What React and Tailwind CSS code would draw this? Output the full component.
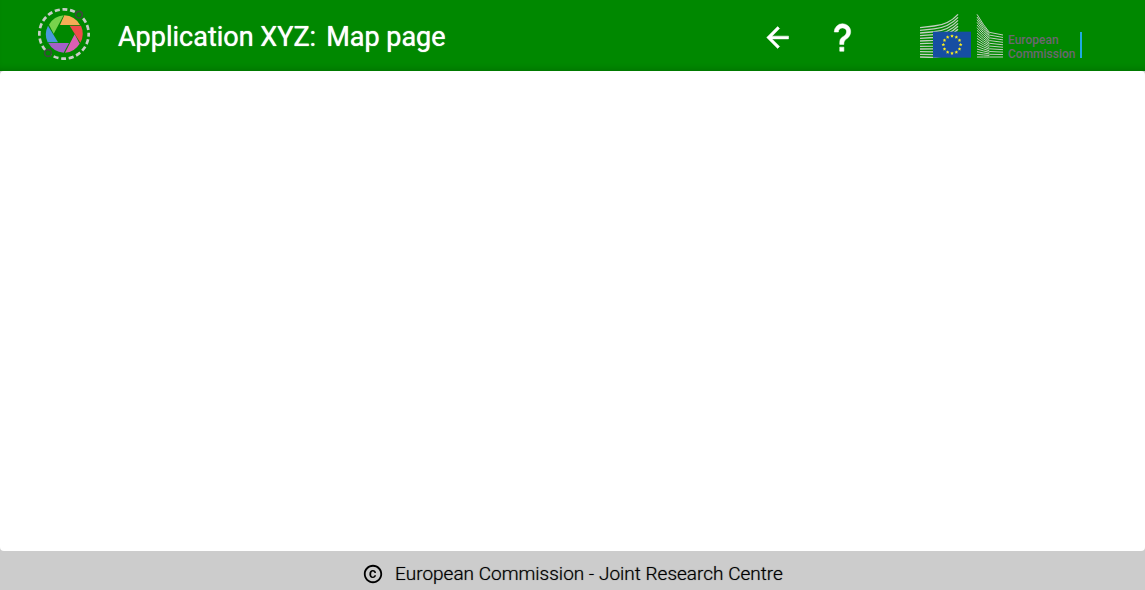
import React from "react";

const blades = [
  { fill: "#f5ad56", d: "M103 46A57 57 0 0 1 150 75L90 75Z" },
  { fill: "#ee4b4b", d: "M119 77L153 77A57 57 0 0 1 151 128Z" },
  { fill: "#dc5fb4", d: "M134 103L149 131A57 57 0 0 1 105 158Z" },
  { fill: "#a560c8", d: "M117 129L101 158A57 57 0 0 1 55 129Z" },
  { fill: "#4a98dc", d: "M84 127L53 127A57 57 0 0 1 54 77Z" },
  { fill: "#78d24c", d: "M71 101L57 74A57 57 0 0 1 101 46Z" },
];

const leftLines = Array.from({ length: 12 }, (_, i) => {
  const start = 66 + i * 8;
  const bend = 58 + i * 8.6;
  const end = 26 + i * 9;
  return `M30 ${start}L72 ${bend + 3}Q116 ${bend - 1} 144 ${end}`;
});

const sailLines = Array.from({ length: 17 }, (_, i) => {
  const t = i / 16;
  const start = 26 + 128 * t;
  const knee = 80 + 74 * t;
  return `M201 ${start}Q220 ${start + (knee - start) * 0.6} 238 ${knee}`;
});

const wallLines = Array.from({ length: 10 }, (_, i) => {
  const t = i / 9;
  return `M238 ${80 + 74 * t}L279 ${88 + 66 * t}`;
});

const stars = Array.from({ length: 12 }, (_, i) => {
  const a = (i * Math.PI) / 6;
  const cx = 126 + 26 * Math.sin(a);
  const cy = 117 - 26 * Math.cos(a);
  return Array.from({ length: 10 }, (_, k) => {
    const r = k % 2 ? 2.8 : 5.6;
    const b = (k * Math.PI) / 5;
    return `${cx + r * Math.sin(b)},${cy - r * Math.cos(b)}`;
  }).join(" ");
});

function AppLogo() {
  return (
    <svg className="size-[52px] shrink-0" viewBox="24 24 156 156" aria-hidden="true">
      <circle cx="102" cy="102" r="74" fill="none" stroke="#c8cdc8" strokeWidth="8" strokeDasharray="15 8.25" strokeDashoffset="7" />
      {blades.map((b) => (
        <path key={b.fill} d={b.d} fill={b.fill} />
      ))}
      <circle cx="147" cy="44" r="10" fill="#008800" stroke="#3c4a3c" strokeWidth="5" />
      <circle cx="54" cy="159" r="10" fill="#008800" stroke="#3c4a3c" strokeWidth="5" />
    </svg>
  );
}

function CommissionLogo() {
  return (
    <div className="flex items-baseline-last">
      <svg className="h-[45px] w-[84px]" viewBox="30 22 252 135" aria-hidden="true">
        <g fill="none" stroke="#c3cfc0" strokeWidth="4">
          {leftLines.map((d) => (
            <path key={d} d={d} />
          ))}
        </g>
        <rect x="69" y="78" width="114" height="78" fill="#164ea2" />
        {stars.map((p) => (
          <polygon key={p} points={p} fill="#f8ec20" />
        ))}
        <g fill="none" stroke="#c3cfc0" strokeWidth="3">
          {sailLines.concat(wallLines).map((d) => (
            <path key={d} d={d} />
          ))}
        </g>
      </svg>
      <p className="ml-1 w-[72px] text-[12px] leading-[14px] font-medium text-[#6b6770]">
        European
        <br />
        Commission
      </p>
      <span className="h-[26px] w-[2px] bg-[#1fa9e1]" />
    </div>
  );
}

export default function App() {
  return (
    <div className="flex min-h-screen flex-col bg-[#cccccc] font-[Roboto,sans-serif]">
      <header className="flex h-[71px] items-center bg-[#008800] pr-[63px] pb-[3px] pl-[38px] text-white shadow-[inset_0_-6px_6px_-4px_rgba(0,0,0,0.15)]">
        <AppLogo />
        <h1 className="mt-[5px] ml-7 flex gap-[10px] text-[27px] leading-8 font-normal whitespace-nowrap [text-shadow:0_0_1px_white]">
          <span>Application XYZ:</span>
          <span>Map page</span>
        </h1>
        <nav className="mt-[6px] ml-auto flex gap-8">
          <button type="button" aria-label="Back">
            <svg className="size-[33px]" viewBox="0 0 24 24" fill="currentColor">
              <path d="M20,11V13H8L13.5,18.5L12.08,19.92L4.16,12L12.08,4.08L13.5,5.5L8,11H20Z" stroke="currentColor" strokeWidth="0.4" />
            </svg>
          </button>
          <button type="button" aria-label="Help">
            <svg className="size-[33px]" viewBox="0 0 24 24" fill="currentColor">
              <path d="M10,19H13V22H10V19M12,2C17.35,2.22 19.68,7.62 16.5,11.67C15.67,12.67 14.33,13.33 13.67,14.17C13,15 13,16 13,17H10C10,15.33 10,13.92 10.67,12.92C11.33,11.92 12.67,11.33 13.5,10.67C15.92,8.43 15.32,5.26 12,5A3,3 0 0,0 9,8H6A6,6 0 0,1 12,2Z" stroke="currentColor" strokeWidth="0.4" />
            </svg>
          </button>
        </nav>
        <div className="mt-[6px] ml-[61px]">
          <CommissionLogo />
        </div>
      </header>
      <main className="flex-1 rounded bg-white" />
      <footer className="flex h-[39px] items-center justify-center gap-[11px] pt-[7px] text-[19px] font-light text-black [text-shadow:0_0_1px_rgba(0,0,0,0.6)]">
        <svg className="size-[22px]" viewBox="0 0 24 24" fill="currentColor" aria-hidden="true">
          <path d="M11.88 9.14c1.28.06 1.61 1.15 1.63 1.66h1.79c-.08-1.98-1.49-3.19-3.45-3.19C9.64 7.61 8 9 8 12.14c0 1.94.93 4.24 3.84 4.24 2.22 0 3.41-1.65 3.44-2.95h-1.79c-.03.59-.45 1.38-1.63 1.44-1.31-.04-1.86-1.06-1.86-2.73 0-2.89 1.28-2.98 1.88-3zM12 2C6.48 2 2 6.48 2 12s4.48 10 10 10 10-4.480 10-10S17.520 2 12 2zm0 18c-4.410 0-8-3.590-8-8s3.590-8 8-8 8 3.590 8 8-3.590 8-8 8z" />
        </svg>
        <span>European Commission - Joint Research Centre</span>
      </footer>
    </div>
  );
}
